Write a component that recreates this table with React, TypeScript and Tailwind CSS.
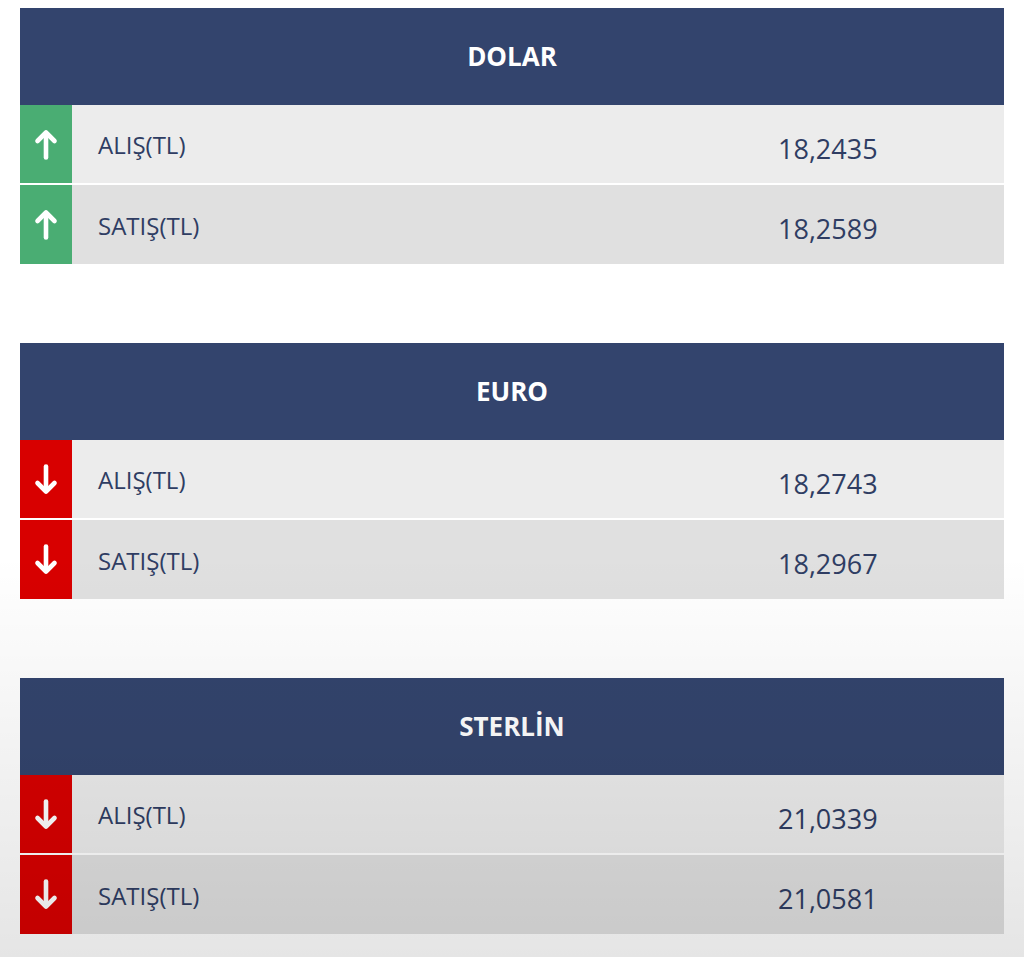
import React from "react";

type Rate = {
  name: string;
  trend: "up" | "down";
  buy: string;
  sell: string;
};

const rates: Rate[] = [
  { name: "DOLAR", trend: "up", buy: "18,2435", sell: "18,2589" },
  { name: "EURO", trend: "down", buy: "18,2743", sell: "18,2967" },
  { name: "STERLİN", trend: "down", buy: "21,0339", sell: "21,0581" },
];

const Arrow = ({ dir }: { dir: "up" | "down" }) => (
  <svg
    width="24"
    height="31"
    viewBox="0 0 24 31"
    fill="none"
    stroke="white"
    strokeWidth="4.6"
    strokeLinecap="round"
    strokeLinejoin="round"
    aria-hidden="true"
  >
    {dir === "up" ? (
      <>
        <path d="M12 28.5V4" />
        <path d="M3.5 12 12 3.5l8.5 8.5" />
      </>
    ) : (
      <>
        <path d="M12 2.5V27" />
        <path d="M3.5 19 12 27.5l8.5-8.5" />
      </>
    )}
  </svg>
);

const RateRow = ({
  label,
  value,
  trend,
  shade,
}: {
  label: string;
  value: string;
  trend: "up" | "down";
  shade: "light" | "dark";
}) => (
  <div
    className={
      shade === "light"
        ? "flex h-[78px] items-stretch bg-[#ececec]"
        : "flex h-[79px] items-stretch bg-[#e0e0e0]"
    }
  >
    <div
      className={
        trend === "up"
          ? "flex w-[52px] items-center justify-center bg-[#4aad73]"
          : "flex w-[52px] items-center justify-center bg-[#d80000]"
      }
    >
      <Arrow dir={trend} />
    </div>
    <div className="flex flex-1 items-center pl-[26px] pt-[2px] text-[24px] text-[#2f3d63]">
      {label}
    </div>
    <div className="flex w-[226px] items-center pt-[10px] text-[27px] text-[#2f3d63]">
      {value}
    </div>
  </div>
);

export default function App() {
  return (
    <div className="relative min-h-[957px] bg-white font-['Open_Sans',sans-serif]">
      <div className="flex flex-col gap-[79px] px-[20px] pt-[8px]">
        {rates.map((r) => (
          <section key={r.name} className="flex flex-col">
            <header className="flex h-[97px] items-center justify-center bg-[#33446d] text-[26px] font-bold text-white">
              {r.name}
            </header>
            <RateRow label="ALIŞ(TL)" value={r.buy} trend={r.trend} shade="light" />
            <div className="h-[2px] bg-white" />
            <RateRow label="SATIŞ(TL)" value={r.sell} trend={r.trend} shade="dark" />
          </section>
        ))}
      </div>
      <div className="pointer-events-none absolute inset-0 bg-[linear-gradient(to_bottom,transparent_58%,rgba(0,0,0,0.1))]" />
    </div>
  );
}
